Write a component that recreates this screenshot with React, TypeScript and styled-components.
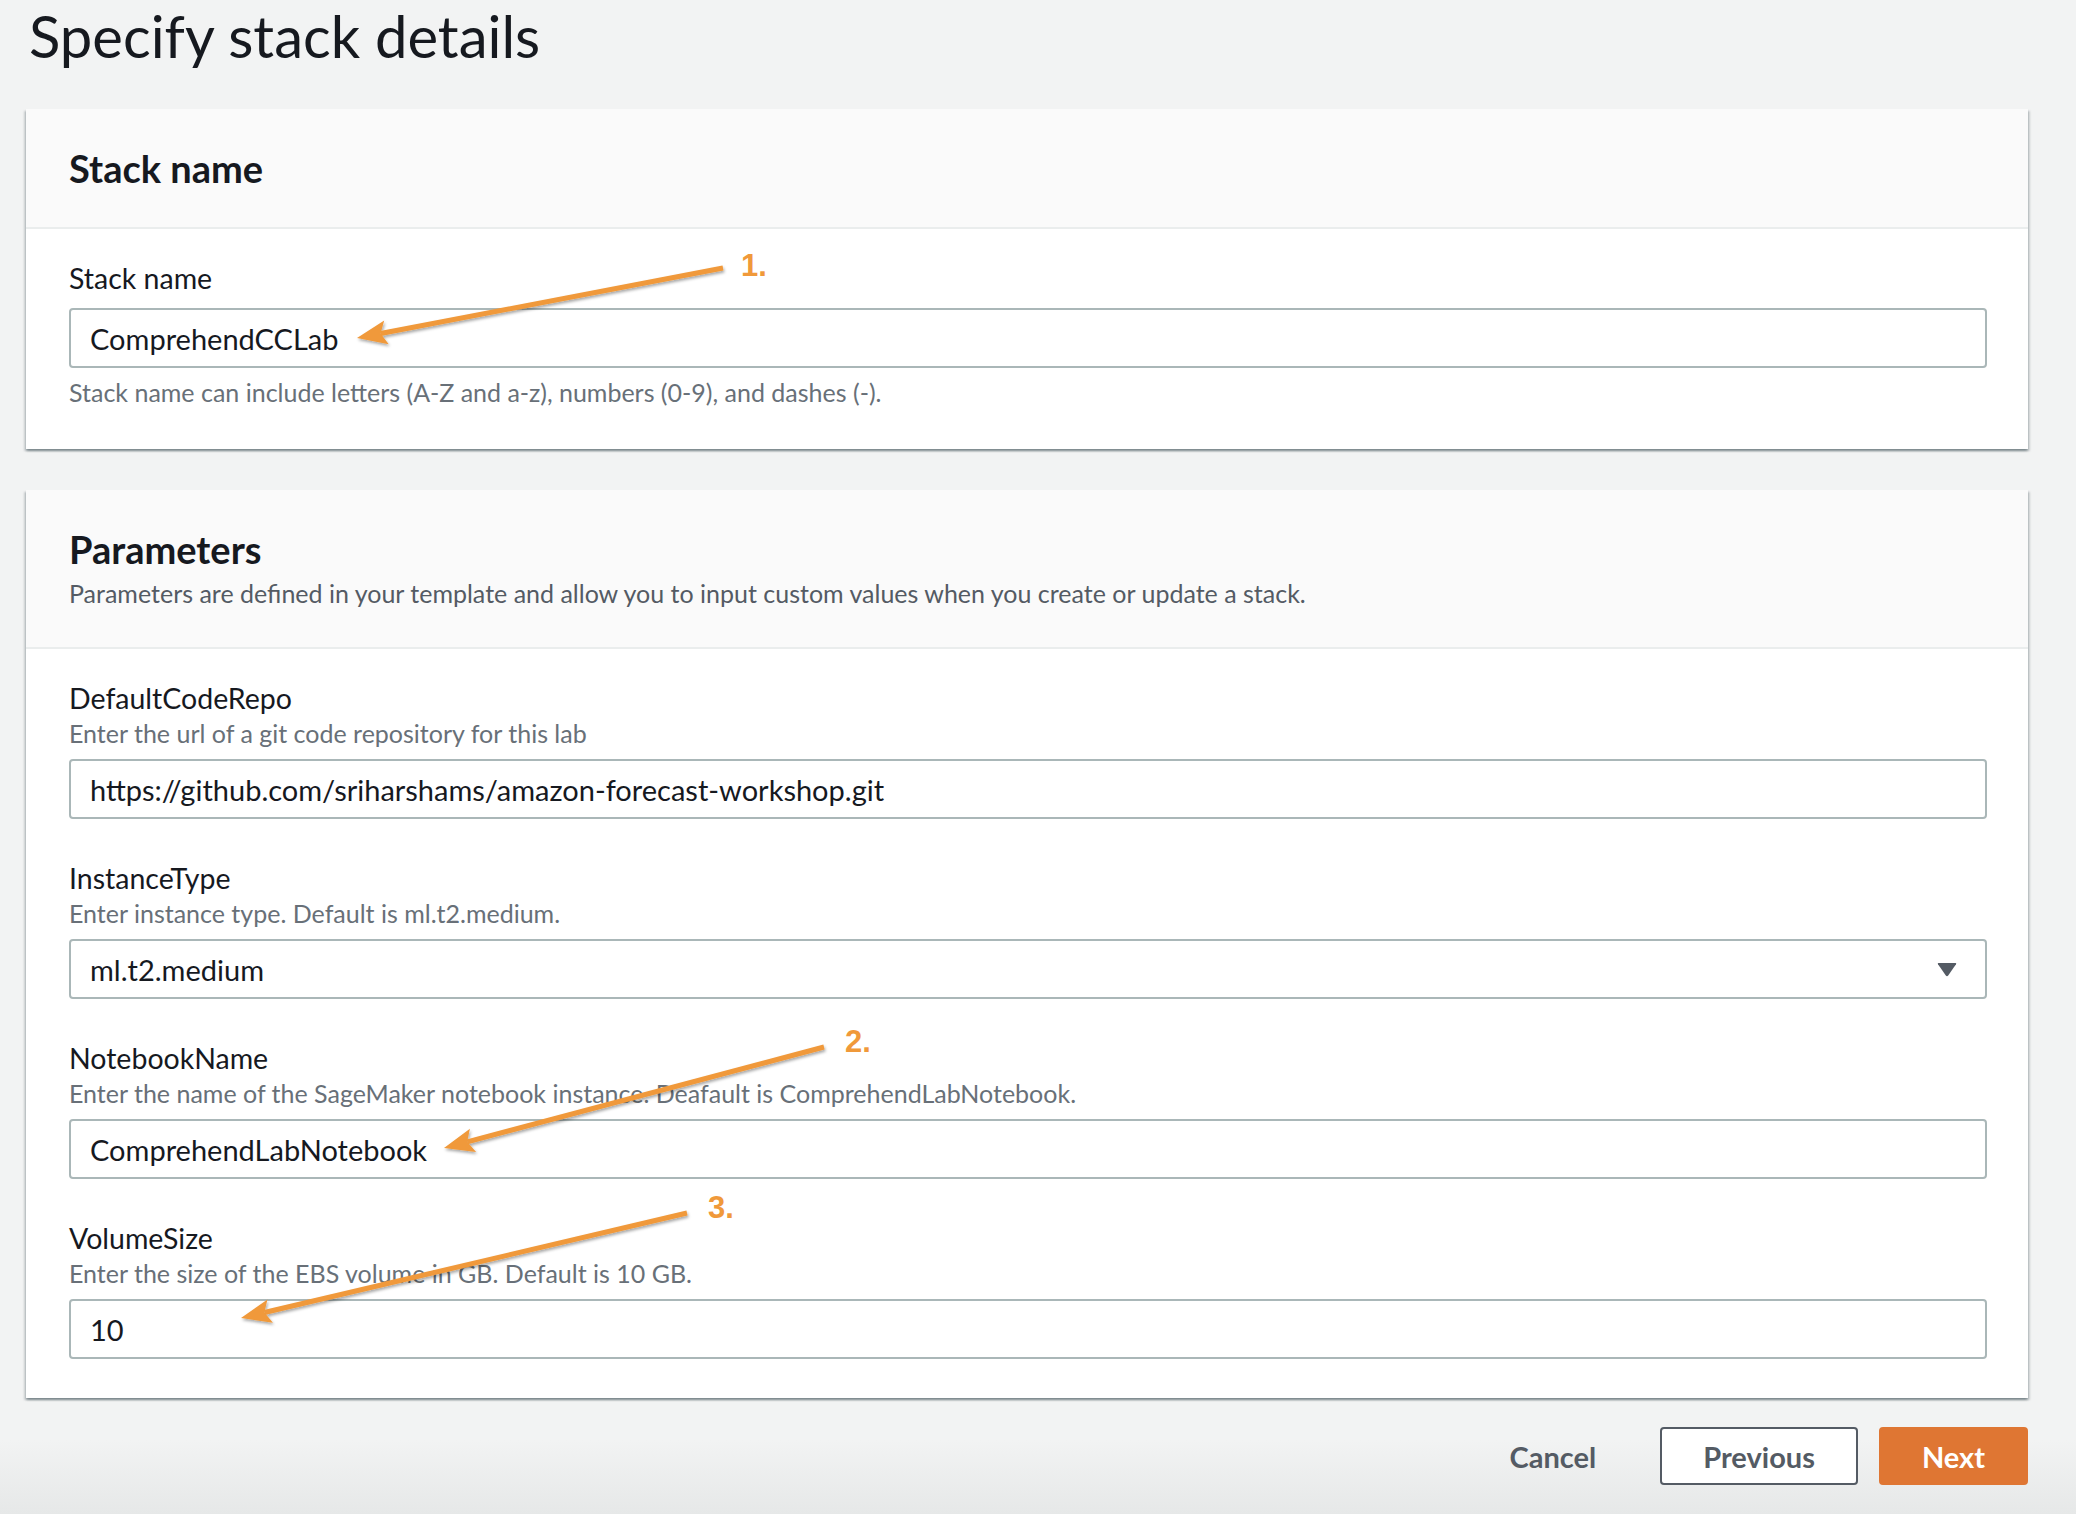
import React from "react";
import styled, { createGlobalStyle } from "styled-components";

const GlobalStyle = createGlobalStyle`
  html, body {
    margin: 0;
    padding: 0;
  }
  body {
    background: #f2f3f3;
    font-family: Lato, "Open Sans", sans-serif;
    color: #16191f;
  }
`;

const Page = styled.div`
  position: relative;
  width: 2076px;
  height: 1514px;
  box-sizing: border-box;
  padding: 0 48px 0 26px;
  overflow: hidden;
  background: linear-gradient(to bottom, #f2f3f3 1440px, #e6e8e8 1514px);
`;

const Title = styled.h1`
  margin: 0 0 37px 3px;
  font-size: 58px;
  line-height: 72px;
  font-weight: 400;
  color: #16191f;
`;

const Panel = styled.section`
  background: #fff;
  box-shadow: 0 2px 2px rgba(0, 28, 36, 0.3), 2px 2px 2px rgba(0, 28, 36, 0.15),
    -2px 2px 2px rgba(0, 28, 36, 0.15);

  & + & {
    margin-top: 41px;
  }
`;

const PanelHeader = styled.header<{ $bottom: number }>`
  background: #fafafa;
  border-bottom: 2px solid #eaeded;
  padding: 36px 41px ${(p) => p.$bottom}px 43px;
`;

const Heading = styled.h2`
  margin: 0;
  font-size: 38px;
  line-height: 46px;
  font-weight: 700;
`;

const HeaderText = styled.p`
  margin: 5px 0 5px;
  font-size: 25px;
  line-height: 32px;
  color: #545b64;
`;

const PanelBody = styled.div`
  padding: 31px 41px 39px 43px;
  display: flex;
  flex-direction: column;
  gap: 41px;
`;

const Field = styled.div`
  display: flex;
  flex-direction: column;
`;

const Label = styled.label`
  font-size: 28.5px;
  line-height: 36px;
  color: #16191f;
`;

const Description = styled.div`
  margin-top: 1px;
  font-size: 25px;
  line-height: 32px;
  color: #687078;
`;

const Hint = styled(Description)`
  margin-top: 8px;
  margin-bottom: 2px;
`;

const InputBox = styled.div<{ $gap?: number }>`
  margin-top: ${(p) => p.$gap ?? 10}px;
  height: 60px;
  box-sizing: border-box;
  border: 2px solid #aab7b8;
  border-radius: 4px;
  padding: 0 28px 0 19px;
  display: flex;
  align-items: center;
  justify-content: space-between;
  font-size: 29px;
  color: #16191f;
`;

const Caret = styled.svg`
  width: 20px;
  height: 15px;
  fill: #545b64;
`;

const Actions = styled.div`
  margin-top: 29px;
  display: flex;
  justify-content: flex-end;
  gap: 21px;
`;

const Button = styled.button<{ $variant: "link" | "normal" | "primary" }>`
  height: 58px;
  box-sizing: border-box;
  padding: 0 41px;
  border-radius: 4px;
  font-family: Lato, "Open Sans", sans-serif;
  font-size: 29px;
  font-weight: 700;
  cursor: pointer;
  color: ${(p) => (p.$variant === "primary" ? "#fff" : "#545b64")};
  background: ${(p) =>
    p.$variant === "primary" ? "#df7633" : p.$variant === "normal" ? "#fff" : "transparent"};
  border: 2px solid
    ${(p) => (p.$variant === "primary" ? "#df7633" : p.$variant === "normal" ? "#545b64" : "transparent")};
`;

const Overlay = styled.svg`
  position: absolute;
  top: 0;
  left: 0;
  pointer-events: none;
`;

const StepLabel = styled.text`
  font-family: "Liberation Sans", Arial, sans-serif;
  font-weight: 700;
  font-size: 31px;
  fill: #f0993a;
`;

type Pt = [number, number];

const arrows: { from: Pt; to: Pt; label: string; at: Pt }[] = [
  { from: [723, 268], to: [357, 338], label: "1.", at: [741, 276] },
  { from: [824, 1047], to: [444, 1148], label: "2.", at: [845, 1052] },
  { from: [687, 1213], to: [241, 1318], label: "3.", at: [708, 1218] },
];

function Arrow({ from, to }: { from: Pt; to: Pt }) {
  const dx = to[0] - from[0];
  const dy = to[1] - from[1];
  const len = Math.hypot(dx, dy);
  const ux = dx / len;
  const uy = dy / len;
  const nx = -uy;
  const ny = ux;
  const head = 30;
  const half = 12;
  const bx = to[0] - ux * head;
  const by = to[1] - uy * head;
  const notchX = to[0] - ux * (head - 6);
  const notchY = to[1] - uy * (head - 6);
  const pts = [
    [to[0], to[1]],
    [bx + nx * half, by + ny * half],
    [notchX, notchY],
    [bx - nx * half, by - ny * half],
  ]
    .map((p) => p.join(","))
    .join(" ");
  return (
    <g filter="url(#arrowShadow)">
      <line
        x1={from[0]}
        y1={from[1]}
        x2={notchX}
        y2={notchY}
        stroke="#f0993a"
        strokeWidth={5}
        strokeLinecap="butt"
      />
      <polygon points={pts} fill="#f0993a" />
    </g>
  );
}

export default function App() {
  return (
    <>
      <GlobalStyle />
      <Page>
        <Title>Specify stack details</Title>

        <Panel>
          <PanelHeader $bottom={36}>
            <Heading>Stack name</Heading>
          </PanelHeader>
          <PanelBody>
            <Field>
              <Label>Stack name</Label>
              <InputBox $gap={12}>ComprehendCCLab</InputBox>
              <Hint>Stack name can include letters (A-Z and a-z), numbers (0-9), and dashes (-).</Hint>
            </Field>
          </PanelBody>
        </Panel>

        <Panel>
          <PanelHeader $bottom={33}>
            <Heading>Parameters</Heading>
            <HeaderText>
              Parameters are defined in your template and allow you to input custom values when you create or update a
              stack.
            </HeaderText>
          </PanelHeader>
          <PanelBody>
            <Field>
              <Label>DefaultCodeRepo</Label>
              <Description>Enter the url of a git code repository for this lab</Description>
              <InputBox>https://github.com/sriharshams/amazon-forecast-workshop.git</InputBox>
            </Field>
            <Field>
              <Label>InstanceType</Label>
              <Description>Enter instance type. Default is ml.t2.medium.</Description>
              <InputBox>
                ml.t2.medium
                <Caret viewBox="0 0 20 15">
                  <path d="M1.5 1 H18.5 Q19.8 1 19 2.3 L11.2 13.6 Q10 15 8.8 13.6 L1 2.3 Q0.2 1 1.5 1 Z" />
                </Caret>
              </InputBox>
            </Field>
            <Field>
              <Label>NotebookName</Label>
              <Description>Enter the name of the SageMaker notebook instance. Deafault is ComprehendLabNotebook.</Description>
              <InputBox>ComprehendLabNotebook</InputBox>
            </Field>
            <Field>
              <Label>VolumeSize</Label>
              <Description>Enter the size of the EBS volume in GB. Default is 10 GB.</Description>
              <InputBox>10</InputBox>
            </Field>
          </PanelBody>
        </Panel>

        <Actions>
          <Button $variant="link">Cancel</Button>
          <Button $variant="normal">Previous</Button>
          <Button $variant="primary">Next</Button>
        </Actions>

        <Overlay width={2076} height={1514} viewBox="0 0 2076 1514">
          <defs>
            <filter id="arrowShadow" x="-10%" y="-30%" width="120%" height="160%">
              <feDropShadow dx="1" dy="2" stdDeviation="1.5" floodColor="#000" floodOpacity="0.35" />
            </filter>
          </defs>
          {arrows.map((a) => (
            <g key={a.label}>
              <Arrow from={a.from} to={a.to} />
              <StepLabel x={a.at[0]} y={a.at[1]}>
                {a.label}
              </StepLabel>
            </g>
          ))}
        </Overlay>
      </Page>
    </>
  );
}
